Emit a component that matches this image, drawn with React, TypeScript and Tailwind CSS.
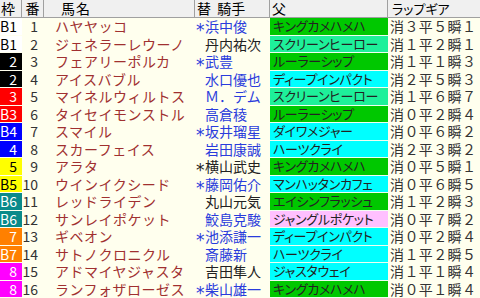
import React from 'react';

type Row = {
  waku: string;
  no: number;
  name: string;
  jockey: string;
  mark: boolean;
  blue: boolean;
  sire: string;
  gear: string;
};

const WAKU: Record<string, string> = {
  '1': 'bg-white text-black',
  '2': 'bg-black text-white',
  '3': 'bg-[#ff0000] text-white',
  '4': 'bg-[#0000ff] text-white',
  '5': 'bg-[#ffff00] text-black',
  '6': 'bg-[#0a8a8a] text-white',
  '7': 'bg-[#ff8000] text-white',
  '8': 'bg-[#ff00ff] text-white',
};

const SIRE: Record<string, string> = {
  キングカメハメハ: 'bg-[#00c800]',
  ルーラーシップ: 'bg-[#00c800]',
  エイシンフラッシュ: 'bg-[#00c800]',
  スクリーンヒーロー: 'bg-[#1ef09a]',
  ジャングルポケット: 'bg-[#ffc0ff]',
};

const rows: Row[] = [
  { waku: 'B1', no: 1, name: 'ハヤヤッコ', jockey: '浜中俊', mark: true, blue: true, sire: 'キングカメハメハ', gear: '消３平５瞬１' },
  { waku: 'B1', no: 2, name: 'ジェネラーレウーノ', jockey: '丹内祐次', mark: false, blue: false, sire: 'スクリーンヒーロー', gear: '消１平２瞬１' },
  { waku: '2', no: 3, name: 'フェアリーポルカ', jockey: '武豊', mark: true, blue: true, sire: 'ルーラーシップ', gear: '消１平１瞬３' },
  { waku: '2', no: 4, name: 'アイスバブル', jockey: '水口優也', mark: false, blue: true, sire: 'ディープインパクト', gear: '消２平５瞬３' },
  { waku: '3', no: 5, name: 'マイネルウィルトス', jockey: 'Ｍ．デム', mark: false, blue: true, sire: 'スクリーンヒーロー', gear: '消１平６瞬７' },
  { waku: 'B3', no: 6, name: 'タイセイモンストル', jockey: '高倉稜', mark: false, blue: true, sire: 'ルーラーシップ', gear: '消０平２瞬４' },
  { waku: 'B4', no: 7, name: 'スマイル', jockey: '坂井瑠星', mark: true, blue: true, sire: 'ダイワメジャー', gear: '消０平６瞬２' },
  { waku: '4', no: 8, name: 'スカーフェイス', jockey: '岩田康誠', mark: false, blue: true, sire: 'ハーツクライ', gear: '消２平３瞬２' },
  { waku: '5', no: 9, name: 'アラタ', jockey: '横山武史', mark: true, blue: false, sire: 'キングカメハメハ', gear: '消０平５瞬１' },
  { waku: 'B5', no: 10, name: 'ウインイクシード', jockey: '藤岡佑介', mark: true, blue: true, sire: 'マンハッタンカフェ', gear: '消０平６瞬５' },
  { waku: 'B6', no: 11, name: 'レッドライデン', jockey: '丸山元気', mark: false, blue: false, sire: 'エイシンフラッシュ', gear: '消１平２瞬３' },
  { waku: 'B6', no: 12, name: 'サンレイポケット', jockey: '鮫島克駿', mark: false, blue: true, sire: 'ジャングルポケット', gear: '消０平７瞬２' },
  { waku: '7', no: 13, name: 'ギベオン', jockey: '池添謙一', mark: true, blue: true, sire: 'ディープインパクト', gear: '消０平２瞬４' },
  { waku: 'B7', no: 14, name: 'サトノクロニクル', jockey: '斎藤新', mark: false, blue: true, sire: 'ハーツクライ', gear: '消１平２瞬５' },
  { waku: '8', no: 15, name: 'アドマイヤジャスタ', jockey: '吉田隼人', mark: false, blue: false, sire: 'ジャスタウェイ', gear: '消１平１瞬４' },
  { waku: '8', no: 16, name: 'ランフォザローゼス', jockey: '柴山雄一', mark: true, blue: true, sire: 'キングカメハメハ', gear: '消０平１瞬４' },
];

const font = "font-['Noto_Sans_CJK_JP','Noto_Sans',sans-serif]";

export default function App() {
  return (
    <div className={`w-[480px] h-[298px] overflow-hidden bg-[#ffffee] ${font}`}>
      {/* header */}
      <div className="flex h-[18px] leading-[17px] bg-[#f0f0f0] border-b border-[#a0a0a0] text-[14px] text-black [font-feature-settings:'palt']">
        <div className="w-[22px] border-r border-[#a0a0a0] pl-[1px]">枠</div>
        <div className="w-[22px] border-r border-[#a0a0a0] text-center">番</div>
        <div className="w-[151px] border-r border-[#a0a0a0] pl-[17px] tracking-[1px]">馬名</div>
        <div className="w-[75px] border-r border-[#a0a0a0] pl-[2px] whitespace-nowrap">替&nbsp;&nbsp;騎手</div>
        <div className="w-[118px] border-r border-[#a0a0a0] pl-[2px]">父</div>
        <div className="flex-1 pl-[4px] text-[13px]">ラップギア</div>
      </div>

      {rows.map((r) => {
        const key = r.waku.replace('B', '');
        return (
          <div key={r.no} className="flex h-[17.5px] leading-[16.5px] text-[14px]">
            <div className={`w-[22px] shrink-0 border-b border-[#ffffee] text-right pr-[5px] ${WAKU[key]}`}>
              {r.waku}
            </div>
            <div className="w-[22px] shrink-0 text-right pr-[6px] text-[#333]">{r.no}</div>
            <div className="w-[151px] shrink-0 pl-[11px] tracking-[0.5px] text-[#a03030] whitespace-nowrap overflow-hidden">
              {r.name}
            </div>
            <div className={`w-[75px] shrink-0 flex whitespace-nowrap ${r.blue ? 'text-[#2a3cdc]' : 'text-[#222]'}`}>
              <span className="w-[10px] shrink-0 pl-[1px] pt-[4px] text-[17px] leading-[16px] font-['DejaVu_Sans',sans-serif]">
                {r.mark ? '*' : ''}
              </span>
              <span>{r.jockey}</span>
            </div>
            <div
              className={`w-[118px] shrink-0 border-b border-[#f0fff0] pl-[3px] text-[13px] tracking-[-0.3px] text-[#222] whitespace-nowrap overflow-hidden [font-feature-settings:'palt'] ${SIRE[r.sire] ?? 'bg-[#00ffff]'}`}
            >
              {r.sire}
            </div>
            <div className="flex-1 pl-[2px] tracking-[0.4px] text-[#333] whitespace-nowrap">{r.gear}</div>
          </div>
        );
      })}
    </div>
  );
}
